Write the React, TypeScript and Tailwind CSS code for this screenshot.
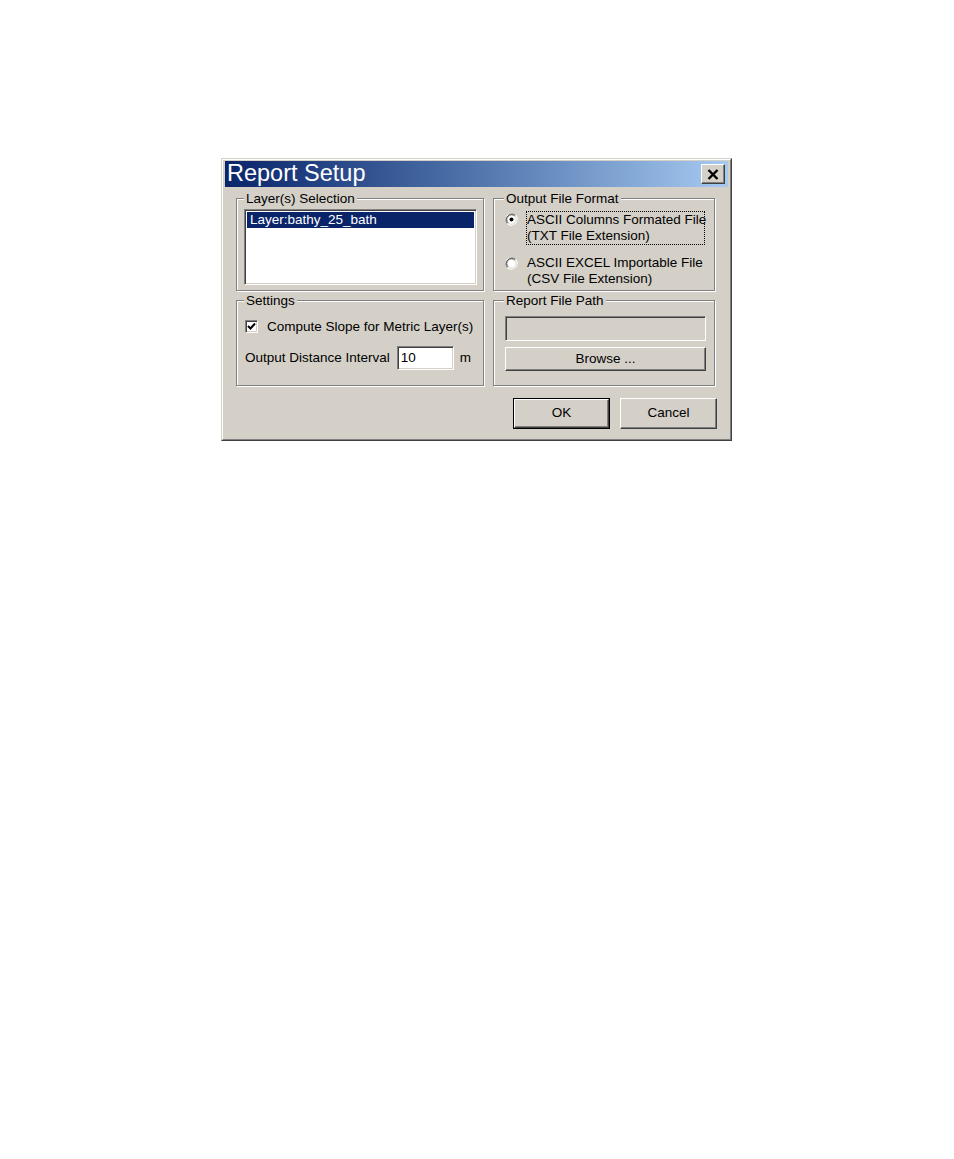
import React from 'react'

function GroupBox({ title, boxClass, legendClass, className, children }: { title: string; boxClass: string; legendClass: string; className: string; children?: React.ReactNode }) {
  return (
    <fieldset className={`shrink-0 border border-[#808080] shadow-[inset_1px_1px_0_#fff,1px_1px_0_#fff] ${boxClass}`}>
      <legend className={`bg-[#d4d0c8] px-[2px] text-[13.5px] leading-[15px] ${legendClass}`}>{title}</legend>
      <div className={className}>{children}</div>
    </fieldset>
  )
}

function Button({ label, className }: { label: string; className: string }) {
  return (
    <button className={`flex shrink-0 items-center justify-center border border-t-white border-l-white border-r-[#404040] border-b-[#404040] bg-[#d4d0c8] text-[13.5px] text-black shadow-[inset_-1px_-1px_0_#808080] ${className}`}>
      {label}
    </button>
  )
}

function Radio({ checked }: { checked?: boolean }) {
  return (
    <svg width="13" height="13" viewBox="0 0 13 13" className="shrink-0">
      <circle cx="6.5" cy="6.5" r="6" fill="#fff" />
      <path d="M2.3 10.7 A6 6 0 0 1 10.7 2.3" fill="none" stroke="#808080" strokeWidth="1" />
      <path d="M3.1 9.9 A4.8 4.8 0 0 1 9.9 3.1" fill="none" stroke="#404040" strokeWidth="1" />
      <path d="M10.7 2.3 A6 6 0 0 1 2.3 10.7" fill="none" stroke="#fff" strokeWidth="1" />
      <path d="M9.9 3.1 A4.8 4.8 0 0 1 3.1 9.9" fill="none" stroke="#d4d0c8" strokeWidth="1" />
      {checked && <circle cx="6.5" cy="6.5" r="2" fill="#000" />}
    </svg>
  )
}

export default function App(): React.JSX.Element {
  return (
    <div className="min-h-screen bg-white pt-[158px] pl-[221px] font-['Liberation_Sans',Arial,sans-serif] text-black">
      <div className="h-[283px] w-[511px] border border-t-[#d4d0c8] border-l-[#d4d0c8] border-r-[#404040] border-b-[#404040] bg-[#d4d0c8]">
        <div className="flex h-full flex-col border border-t-white border-l-white border-r-[#808080] border-b-[#808080] px-[2px] pt-[1px]">
          {/* title bar */}
          <div className="flex h-[26px] shrink-0 items-center justify-between bg-linear-to-r from-[#0a246a] to-[#a6caf0] pl-[2px] pr-[3px]">
            <span className="text-[23.5px] leading-none text-white">Report Setup</span>
            <button className="flex h-[20px] w-[24px] items-center justify-center border border-t-white border-l-white border-r-[#404040] border-b-[#404040] bg-[#d4d0c8] shadow-[inset_-1px_-1px_0_#808080]" aria-label="Close">
              <svg width="12" height="11" viewBox="0 0 12 11">
                <path d="M1.5 1 L10.5 10 M10.5 1 L1.5 10" stroke="#000" strokeWidth="2.4" />
              </svg>
            </button>
          </div>

          <div className="mt-[4px] flex shrink-0 gap-[9px] pl-[11px]">
            {/* left column */}
            <div className="flex w-[248px] flex-col gap-[2px]">
              <GroupBox title="Layer(s) Selection" boxClass="h-[100px]" legendClass="ml-[7px]" className="pl-[7px] pt-[3px]">
                <div className="h-[76px] w-[233px] border border-t-[#808080] border-l-[#808080] border-r-white border-b-white bg-white p-[1px] shadow-[inset_1px_1px_0_#404040,inset_-1px_-1px_0_#d4d0c8]">
                  <div className="mx-[1px] mt-[1px] h-[16px] bg-[#0a246a] pl-[3px] text-[13.5px] leading-[16px] text-white">Layer:bathy_25_bath</div>
                </div>
              </GroupBox>
              <GroupBox title="Settings" boxClass="h-[93px]" legendClass="ml-[7px]" className="pl-[8px]">
                <div className="mt-[12px] flex h-[13px] items-center gap-[9px]">
                  <div className="flex h-[13px] w-[13px] shrink-0 items-center justify-center border border-t-[#808080] border-l-[#808080] border-r-white border-b-white bg-white shadow-[inset_1px_1px_0_#404040,inset_-1px_-1px_0_#d4d0c8]">
                    <svg width="9" height="9" viewBox="0 0 9 9">
                      <path d="M1 4 L3.5 6.5 L8 1.5" fill="none" stroke="#000" strokeWidth="2" />
                    </svg>
                  </div>
                  <span className="text-[13.5px] leading-none whitespace-nowrap">Compute Slope for Metric Layer(s)</span>
                </div>
                <div className="mt-[13px] flex h-[24px] items-center">
                  <span className="text-[13.5px] leading-none whitespace-nowrap">Output Distance Interval</span>
                  <div className="ml-[7px] flex h-[24px] w-[57px] shrink-0 items-center border border-t-[#808080] border-l-[#808080] border-r-white border-b-white bg-white pl-[3px] text-[13.5px] shadow-[inset_1px_1px_0_#404040,inset_-1px_-1px_0_#d4d0c8]">
                    10
                  </div>
                  <span className="ml-[6px] text-[13.5px] leading-none">m</span>
                </div>
              </GroupBox>
            </div>

            {/* right column */}
            <div className="flex w-[222px] flex-col gap-[2px]">
              <GroupBox title="Output File Format" boxClass="h-[100px]" legendClass="ml-[10px]" className="pl-[11px] pt-[5px]">
                <div className="flex items-start gap-[8px]">
                  <div className="mt-[2px]">
                    <Radio checked />
                  </div>
                  <div className="w-[179px] border border-dotted border-black text-[13.5px] leading-[16px] whitespace-nowrap">
                    <div>ASCII Columns Formated File</div>
                    <div>(TXT File Extension)</div>
                  </div>
                </div>
                <div className="mt-[9px] flex items-start gap-[8px]">
                  <div className="mt-[3px]">
                    <Radio />
                  </div>
                  <div className="border border-transparent text-[13.5px] leading-[16px] whitespace-nowrap">
                    <div>ASCII EXCEL Importable File</div>
                    <div>(CSV File Extension)</div>
                  </div>
                </div>
              </GroupBox>
              <GroupBox title="Report File Path" boxClass="h-[93px]" legendClass="ml-[10px]" className="pl-[11px]">
                <div className="mt-[8px] h-[25px] w-[201px] border border-t-[#808080] border-l-[#808080] border-r-white border-b-white bg-[#d4d0c8] shadow-[inset_1px_1px_0_#404040,inset_-1px_-1px_0_#d4d0c8]" />
                <Button label="Browse ..." className="mt-[6px] h-[24px] w-[201px]" />
              </GroupBox>
            </div>
          </div>

          {/* bottom buttons */}
          <div className="mt-[12px] flex shrink-0 justify-end gap-[10px] pr-[11px]">
            <div className="border border-black">
              <Button label="OK" className="h-[29px] w-[95px]" />
            </div>
            <Button label="Cancel" className="h-[31px] w-[97px]" />
          </div>
        </div>
      </div>
    </div>
  )
}
